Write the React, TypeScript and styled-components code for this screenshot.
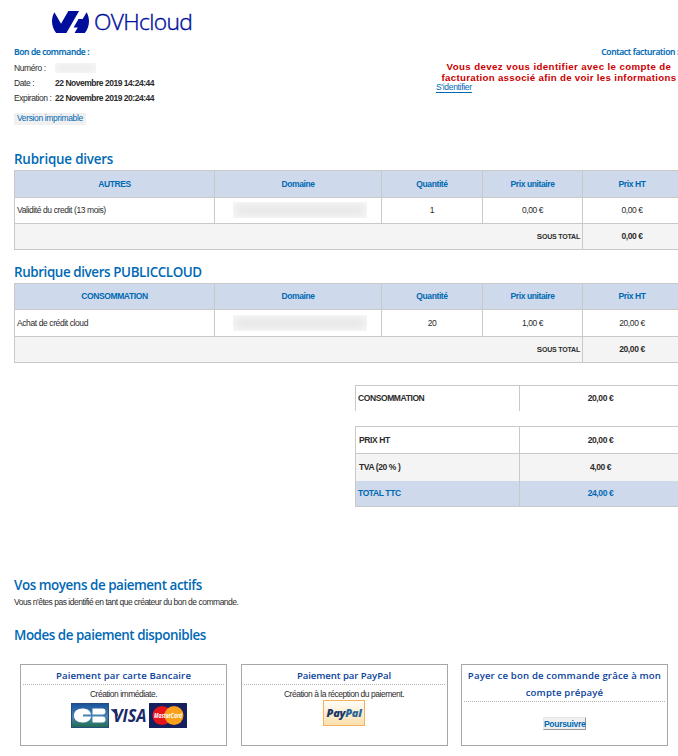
import React from 'react';
import styled, { createGlobalStyle } from 'styled-components';

const LINE = '#c9c9c9';
const BLUE = '#0069b4';
const PALE = '#ced9eb';
const GREY = '#f4f4f4';

const Global = createGlobalStyle`
  * { box-sizing: border-box; }
  html, body { margin: 0; padding: 0; background: #fff; overflow: hidden; }
`;

const Page = styled.main`
  width: 678px;
  height: 756px;
  overflow: hidden;
  padding-left: 14px;
  font-family: 'Liberation Sans', Arial, sans-serif;
  font-size: 8.5px;
  letter-spacing: -0.4px;
  color: #2c2c2c;
  white-space: nowrap;
`;

const Content = styled.div`
  width: 668px;
`;

const Brand = styled.header`
  display: flex;
  align-items: center;
  gap: 5px;
  height: 44px;
  padding-left: 38px;
  color: #000e9c;
`;

const Mark = styled.svg`
  width: 37px;
  height: 22px;
  fill: currentColor;
`;

const BrandName = styled.span`
  font: 300 22.8px/44px 'Open Sans', sans-serif;
  letter-spacing: -0.64px;
  -webkit-text-stroke: 0.4px currentColor;
`;

const Info = styled.section`
  display: flex;
  justify-content: space-between;
  height: 106px;
`;

const OrderInfo = styled.div`
  display: flex;
  flex-direction: column;
  align-items: flex-start;
`;

const Caption = styled.h3<{ $spacing: string }>`
  margin: 0;
  font: 600 8.5px/16px 'Open Sans', sans-serif;
  letter-spacing: ${(p) => p.$spacing};
  -webkit-text-stroke: 0.15px currentColor;
  color: ${BLUE};
`;

const Field = styled.div`
  display: grid;
  grid-template-columns: 41px auto;
  align-items: center;
  height: 15.4px;
  letter-spacing: -0.42px;
`;

const FieldValue = styled.strong`
  letter-spacing: -0.48px;
`;

const Redacted = styled.span<{ $w: number; $h: number; $shift?: number }>`
  display: block;
  width: ${(p) => p.$w}px;
  height: ${(p) => p.$h}px;
  margin-left: ${(p) => p.$shift ?? 0}px;
  background: #e9e9e9;
  box-shadow: inset 0 0 7px 2px #f7f7f7;
`;

const PrintLink = styled.a`
  margin-top: 6.5px;
  width: 72px;
  height: 12px;
  padding-left: 3px;
  background: #f0f0f0;
  color: ${BLUE};
  line-height: 11px;
  letter-spacing: -0.36px;
`;

const Contact = styled.div`
  width: 246px;
`;

const ContactHead = styled.div`
  display: flex;
  justify-content: flex-end;
  padding-right: 3px;
`;

const Warning = styled.p`
  margin: 1px 0 0;
  text-align: center;
  font-size: 9.7px;
  font-weight: 700;
  line-height: 11px;
  color: #cc0000;
`;

const WarningLine = styled.span<{ $spacing: string }>`
  display: block;
  letter-spacing: ${(p) => p.$spacing};
`;

const SignIn = styled.a`
  display: block;
  width: 36px;
  height: 10px;
  line-height: 9px;
  border-bottom: 1px solid ${BLUE};
  color: ${BLUE};
  letter-spacing: -0.3px;
`;

const Heading = styled.h2<{ $top?: number; $spacing?: string }>`
  margin: ${(p) => p.$top ?? 0}px 0 0;
  height: 20px;
  font: 600 13.4px/18px 'Open Sans', sans-serif;
  letter-spacing: ${(p) => p.$spacing ?? '-0.4px'};
  color: ${BLUE};
`;

const Table = styled.div`
  border: 1px solid ${LINE};
  border-width: 1px 1px 0 1px;
`;

const Row = styled.div<{ $h: number; $bg?: string; $total?: boolean }>`
  display: grid;
  grid-template-columns: ${(p) => (p.$total ? '568px 1fr' : '200px 167px 101px 100px 1fr')};
  height: ${(p) => p.$h}px;
  background: ${(p) => p.$bg ?? '#fff'};
  border-bottom: 1px solid ${LINE};
`;

const Cell = styled.div<{ $align?: string; $bold?: boolean; $color?: string; $pad?: number }>`
  display: flex;
  align-items: center;
  justify-content: ${(p) => p.$align ?? 'center'};
  padding: 0 2px 1px ${(p) => p.$pad ?? 2}px;
  font-weight: ${(p) => (p.$bold ? 700 : 400)};
  color: ${(p) => p.$color ?? 'inherit'};
  border-right: 1px solid ${LINE};
  &:last-child { border-right: 0; }
`;

const SubtotalLabel = styled.span`
  display: block;
  font-size: 7px;
  text-transform: uppercase;
  letter-spacing: -0.2px;
  &::first-letter { font-size: 8px; }
`;

const Summary = styled.div<{ $top: number }>`
  margin: ${(p) => p.$top}px 0 0 341px;
  border: 1px solid ${LINE};
  border-bottom: 0;
`;

const SummaryRow = styled.div<{ $h: number; $bg?: string; $line?: boolean; $color?: string }>`
  display: grid;
  grid-template-columns: 164px 1fr;
  height: ${(p) => p.$h}px;
  background: ${(p) => p.$bg ?? '#fff'};
  border-bottom: ${(p) => (p.$line ? `1px solid ${LINE}` : '0')};
  color: ${(p) => p.$color ?? 'inherit'};
`;

const Note = styled.p`
  margin: 0;
  height: 14px;
  line-height: 12px;
  letter-spacing: -0.49px;
`;

const Cards = styled.section`
  display: grid;
  grid-template-columns: 207px 207px 207px;
  column-gap: 13.5px;
  margin: 18px 0 0 6px;
`;

const Card = styled.article`
  display: flex;
  flex-direction: column;
  align-items: center;
  height: 82px;
  padding: 2px 2px 0;
  border: 1px solid #a6a6a6;
`;

const CardTitle = styled.h3<{ $spacing: string }>`
  align-self: stretch;
  margin: 0;
  border-bottom: 1px dotted #b5b5b5;
  text-align: center;
  font: 600 9.6px/17px 'Open Sans', sans-serif;
  letter-spacing: ${(p) => p.$spacing};
  color: #0a439b;
`;

const CardText = styled.p`
  margin: 3px 0 0;
  line-height: 13px;
  letter-spacing: -0.47px;
`;

const Logos = styled.div`
  display: flex;
  gap: 1px;
  margin: 2px 0 0 10px;
`;

const PayLogo = styled.svg`
  display: block;
`;

const PayPalBox = styled.div`
  display: flex;
  align-items: center;
  justify-content: center;
  width: 42px;
  height: 26px;
  margin-top: -1px;
  border: 1px solid #f9b05c;
  background: linear-gradient(#fffdf8, #fbe0ae);
  font: italic 800 11px/24px 'Open Sans', sans-serif;
  letter-spacing: -0.3px;
  color: #1b3668;
`;

const Pal = styled.span`
  color: #2b6797;
`;

const Continue = styled.button`
  width: 43px;
  height: 13px;
  margin-top: 15px;
  padding: 0;
  border: 1px solid;
  border-color: #e8e8e8 #989898 #989898 #e8e8e8;
  background: #efefef;
  font: 700 8.5px/10px 'Liberation Sans', Arial, sans-serif;
  letter-spacing: -0.3px;
  color: ${BLUE};
`;

type Item = { kind: string; label: string; qty: string; unit: string; total: string; rows: [number, number, number] };

const OrderTable = ({ kind, label, qty, unit, total, rows }: Item) => (
  <Table>
    <Row $h={rows[0]} $bg={PALE}>
      {[kind, 'Domaine', 'Quantité', 'Prix unitaire', 'Prix HT'].map((t) => (
        <Cell key={t} $bold $color={BLUE}>{t}</Cell>
      ))}
    </Row>
    <Row $h={rows[1]}>
      <Cell $align="flex-start">{label}</Cell>
      <Cell><Redacted $w={134} $h={16} $shift={3} /></Cell>
      <Cell>{qty}</Cell>
      <Cell>{unit}</Cell>
      <Cell>{total}</Cell>
    </Row>
    <Row $h={rows[2]} $bg={GREY} $total>
      <Cell $align="flex-end" $bold><SubtotalLabel>Sous total</SubtotalLabel></Cell>
      <Cell $bold>{total}</Cell>
    </Row>
  </Table>
);

const CbLogo = () => (
  <PayLogo width="38" height="25" viewBox="0 0 38 25">
    <defs>
      <linearGradient id="cb" x1="0" y1="0" x2="0" y2="1">
        <stop offset="0" stopColor="#17529a" />
        <stop offset="0.55" stopColor="#4a86b4" />
        <stop offset="1" stopColor="#216b4c" />
      </linearGradient>
    </defs>
    <rect x="0.5" y="0.5" width="37" height="24" fill="url(#cb)" stroke="#274c82" />
    <path d="M20 11.5C19.5 7.500 16 5.500 11.500 5.500C6 5.500 3 8.500 3 12.500S6 19.500 11.500 19.500C16 19.500 19.500 17.500 20 13.500H12V11.500Z" fill="#fff" />
    <path d="M21.500 5.500H31.500a3 3 0 0 1 0 6H21.500ZM21.500 13.500H31.500a3 3 0 0 1 0 6H21.500Z" fill="#fff" />
  </PayLogo>
);

const VisaLogo = () => (
  <PayLogo width="38" height="25" viewBox="0 0 38 25">
    <path d="M0.500 6.300H6.500L8.500 14Z" fill="#1a2a69" />
    <text x="3" y="18.500" textLength="33.500" lengthAdjust="spacingAndGlyphs" fontFamily="Open Sans" fontWeight="700" fontStyle="italic" fontSize="17" letterSpacing="0" fill="#1a2a69">VISA</text>
  </PayLogo>
);

const MasterCardLogo = () => (
  <PayLogo width="38" height="25" viewBox="0 0 38 25">
    <rect width="38" height="25" rx="0.500" fill="#16205f" />
    <circle cx="13" cy="12.500" r="9.500" fill="#e8141c" />
    <circle cx="25" cy="12.500" r="9.500" fill="#f9a11b" />
    <text x="5" y="15.200" textLength="28" lengthAdjust="spacingAndGlyphs" fontFamily="Open Sans" fontWeight="700" fontStyle="italic" fontSize="7" letterSpacing="0" fill="#fff">MasterCard</text>
  </PayLogo>
);

export default function App() {
  return (
    <Page>
      <Global />
      <Content>
        <Brand>
          <Mark viewBox="0 4.85 24 14.3" preserveAspectRatio="none">
            <path d="M19.881 10.095l2.563-4.450C23.434 7.389 24 9.404 24 11.555c0 2.880-1.017 5.523-2.710 7.594h-6.620l2.040-3.541h-2.696l3.176-5.513h2.691zm-2.320-5.243L9.333 19.140l.003.009H2.709C1.014 17.077 0 14.435 0 11.555c0-2.152.570-4.170 1.561-5.918L5.855 13.080 10.600 4.852h6.961z" />
          </Mark>
          <BrandName>OVHcloud</BrandName>
        </Brand>

        <Info>
          <OrderInfo>
            <Caption $spacing="-0.37px">Bon de commande :</Caption>
            <Field><span>Numéro :</span><Redacted $w={41} $h={10} /></Field>
            <Field><span>Date :</span><FieldValue>22 Novembre 2019 14:24:44</FieldValue></Field>
            <Field><span>Expiration :</span><FieldValue>22 Novembre 2019 20:24:44</FieldValue></Field>
            <PrintLink>Version imprimable</PrintLink>
          </OrderInfo>
          <Contact>
            <ContactHead><Caption $spacing="-0.32px">Contact facturation :</Caption></ContactHead>
            <Warning>
              <WarningLine $spacing="0.39px">Vous devez vous identifier avec le compte de</WarningLine>
              <WarningLine $spacing="0.3px">facturation associé afin de voir les informations</WarningLine>
            </Warning>
            <SignIn>S'identifier</SignIn>
          </Contact>
        </Info>

        <Heading $spacing="-0.2px">Rubrique divers</Heading>
        <OrderTable kind="AUTRES" label="Validité du credit (13 mois)" qty="1" unit="0,00 €" total="0,00 €" rows={[27, 26, 26]} />

        <Heading $top={13}>Rubrique divers PUBLICCLOUD</Heading>
        <OrderTable kind="CONSOMMATION" label="Achat de crédit cloud" qty="20" unit="1,00 €" total="20,00 €" rows={[26, 27, 26]} />

        <Summary $top={22}>
          <SummaryRow $h={25}>
            <Cell $align="flex-start" $bold>CONSOMMATION</Cell>
            <Cell $bold>20,00 €</Cell>
          </SummaryRow>
        </Summary>
        <Summary $top={15}>
          <SummaryRow $h={27} $line>
            <Cell $align="flex-start" $bold $pad={3}>PRIX HT</Cell>
            <Cell $bold>20,00 €</Cell>
          </SummaryRow>
          <SummaryRow $h={27} $bg={GREY}>
            <Cell $align="flex-start" $bold $pad={3}>TVA (20 % )</Cell>
            <Cell $bold>4,00 €</Cell>
          </SummaryRow>
          <SummaryRow $h={26} $bg={PALE} $line $color={BLUE}>
            <Cell $align="flex-start" $bold>TOTAL TTC</Cell>
            <Cell $bold>24,00 €</Cell>
          </SummaryRow>
        </Summary>

        <Heading $top={69} $spacing="-0.44px">Vos moyens de paiement actifs</Heading>
        <Note>Vous n'êtes pas identifié en tant que créateur du bon de commande.</Note>
        <Heading $top={16} $spacing="-0.46px">Modes de paiement disponibles</Heading>

        <Cards>
          <Card>
            <CardTitle $spacing="0.12px">Paiement par carte Bancaire</CardTitle>
            <CardText>Création immédiate.</CardText>
            <Logos><CbLogo /><VisaLogo /><MasterCardLogo /></Logos>
          </Card>
          <Card>
            <CardTitle $spacing="-0.08px">Paiement par PayPal</CardTitle>
            <CardText>Création à la réception du paiement.</CardText>
            <PayPalBox>Pay<Pal>Pal</Pal></PayPalBox>
          </Card>
          <Card>
            <CardTitle $spacing="0.16px">Payer ce bon de commande grâce à mon<br />compte prépayé</CardTitle>
            <Continue>Poursuivre</Continue>
          </Card>
        </Cards>
      </Content>
    </Page>
  );
}
